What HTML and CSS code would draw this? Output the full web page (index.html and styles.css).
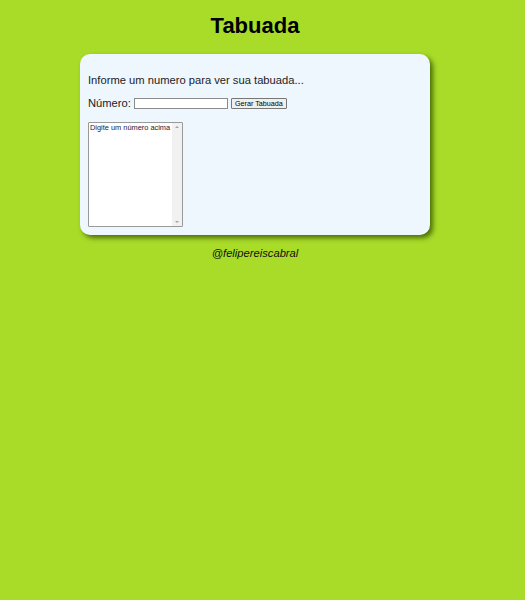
FILE: index.html
```html
<!DOCTYPE html>
<html lang="pt-BR">
<head>
<meta charset="utf-8">
<title>Tabuada</title>
<link rel="stylesheet" href="styles.css">
</head>
<body>
<div class="page">
<header class="top"><h1 class="title">Tabuada</h1></header>
<main class="card">
  <p class="intro">Informe um numero para ver sua tabuada...</p>
  <div class="row">
    <label class="lbl" for="num">Número:</label>
    <input class="num" id="num" type="text">
    <button class="btn" type="button">Gerar Tabuada</button>
  </div>
  <div class="list">
    <div class="items"><div class="item">Digite um número acima</div></div>
    <div class="sbar">
      <span class="arrow up"></span>
      <span class="arrow down"></span>
    </div>
  </div>
</main>
<footer class="foot"><p class="credit">@felipereiscabral</p></footer>
</div>
</body>
</html>
```
FILE: styles.css
```css
html, body {
  margin: 0;
  padding: 0;
  background: #a8dc28;
  font-family: "Liberation Sans", Arial, sans-serif;
}
.page {
  padding-right: 15px;
}
.top {
  display: flex;
  justify-content: center;
  padding-top: 13px;
}
.title {
  margin: 0;
  font-size: 22px;
  line-height: 26px;
  color: #000;
}
.card {
  box-sizing: border-box;
  width: 350px;
  height: 181px;
  margin: 15px auto 0;
  padding: 19px 8px 0;
  background: #eef6fe;
  border-radius: 10px;
  box-shadow: 3px 3px 5px rgba(60, 90, 0, 0.85);
}
.intro {
  margin: 0;
  font-size: 11.2px;
  line-height: 14px;
  color: #222;
}
.row {
  display: flex;
  align-items: center;
  margin-top: 10px;
  gap: 3px;
}
.lbl {
  font-size: 11.2px;
  color: #222;
}
.num {
  box-sizing: border-box;
  width: 94px;
  height: 11px;
  margin: 0;
  padding: 0;
  border: 1px solid #8a8a8a;
  background: #fff;
  font-size: 8px;
}
.btn {
  box-sizing: border-box;
  height: 11px;
  padding: 0 3px;
  font-family: "Liberation Sans", Arial, sans-serif;
  font-size: 7.2px;
  line-height: 9px;
  color: #000;
  background: #efefef;
  border: 1px solid #777;
  border-radius: 1px;
}
.list {
  display: flex;
  box-sizing: border-box;
  margin-top: 13px;
  width: 95px;
  height: 105px;
  background: #fff;
  border: 1px solid #999;
  border-radius: 1px;
}
.items {
  flex: 1;
  padding: 0 1px;
}
.item {
  font-size: 7.4px;
  line-height: 9px;
  color: #1a1a2e;
  white-space: nowrap;
}
.sbar {
  width: 10px;
  background: #f1f1f1;
  display: flex;
  flex-direction: column;
  justify-content: space-between;
  align-items: center;
  padding: 3px 0;
}
.arrow {
  width: 0;
  height: 0;
  border-left: 2px solid transparent;
  border-right: 2px solid transparent;
}
.up { border-bottom: 2px solid #a3a3a3; }
.down { border-top: 2px solid #a3a3a3; }
.foot {
  display: flex;
  justify-content: center;
  margin-top: 12px;
}
.credit {
  margin: 0;
  font-size: 11.2px;
  line-height: 13px;
  font-style: italic;
  color: #111;
}
```
